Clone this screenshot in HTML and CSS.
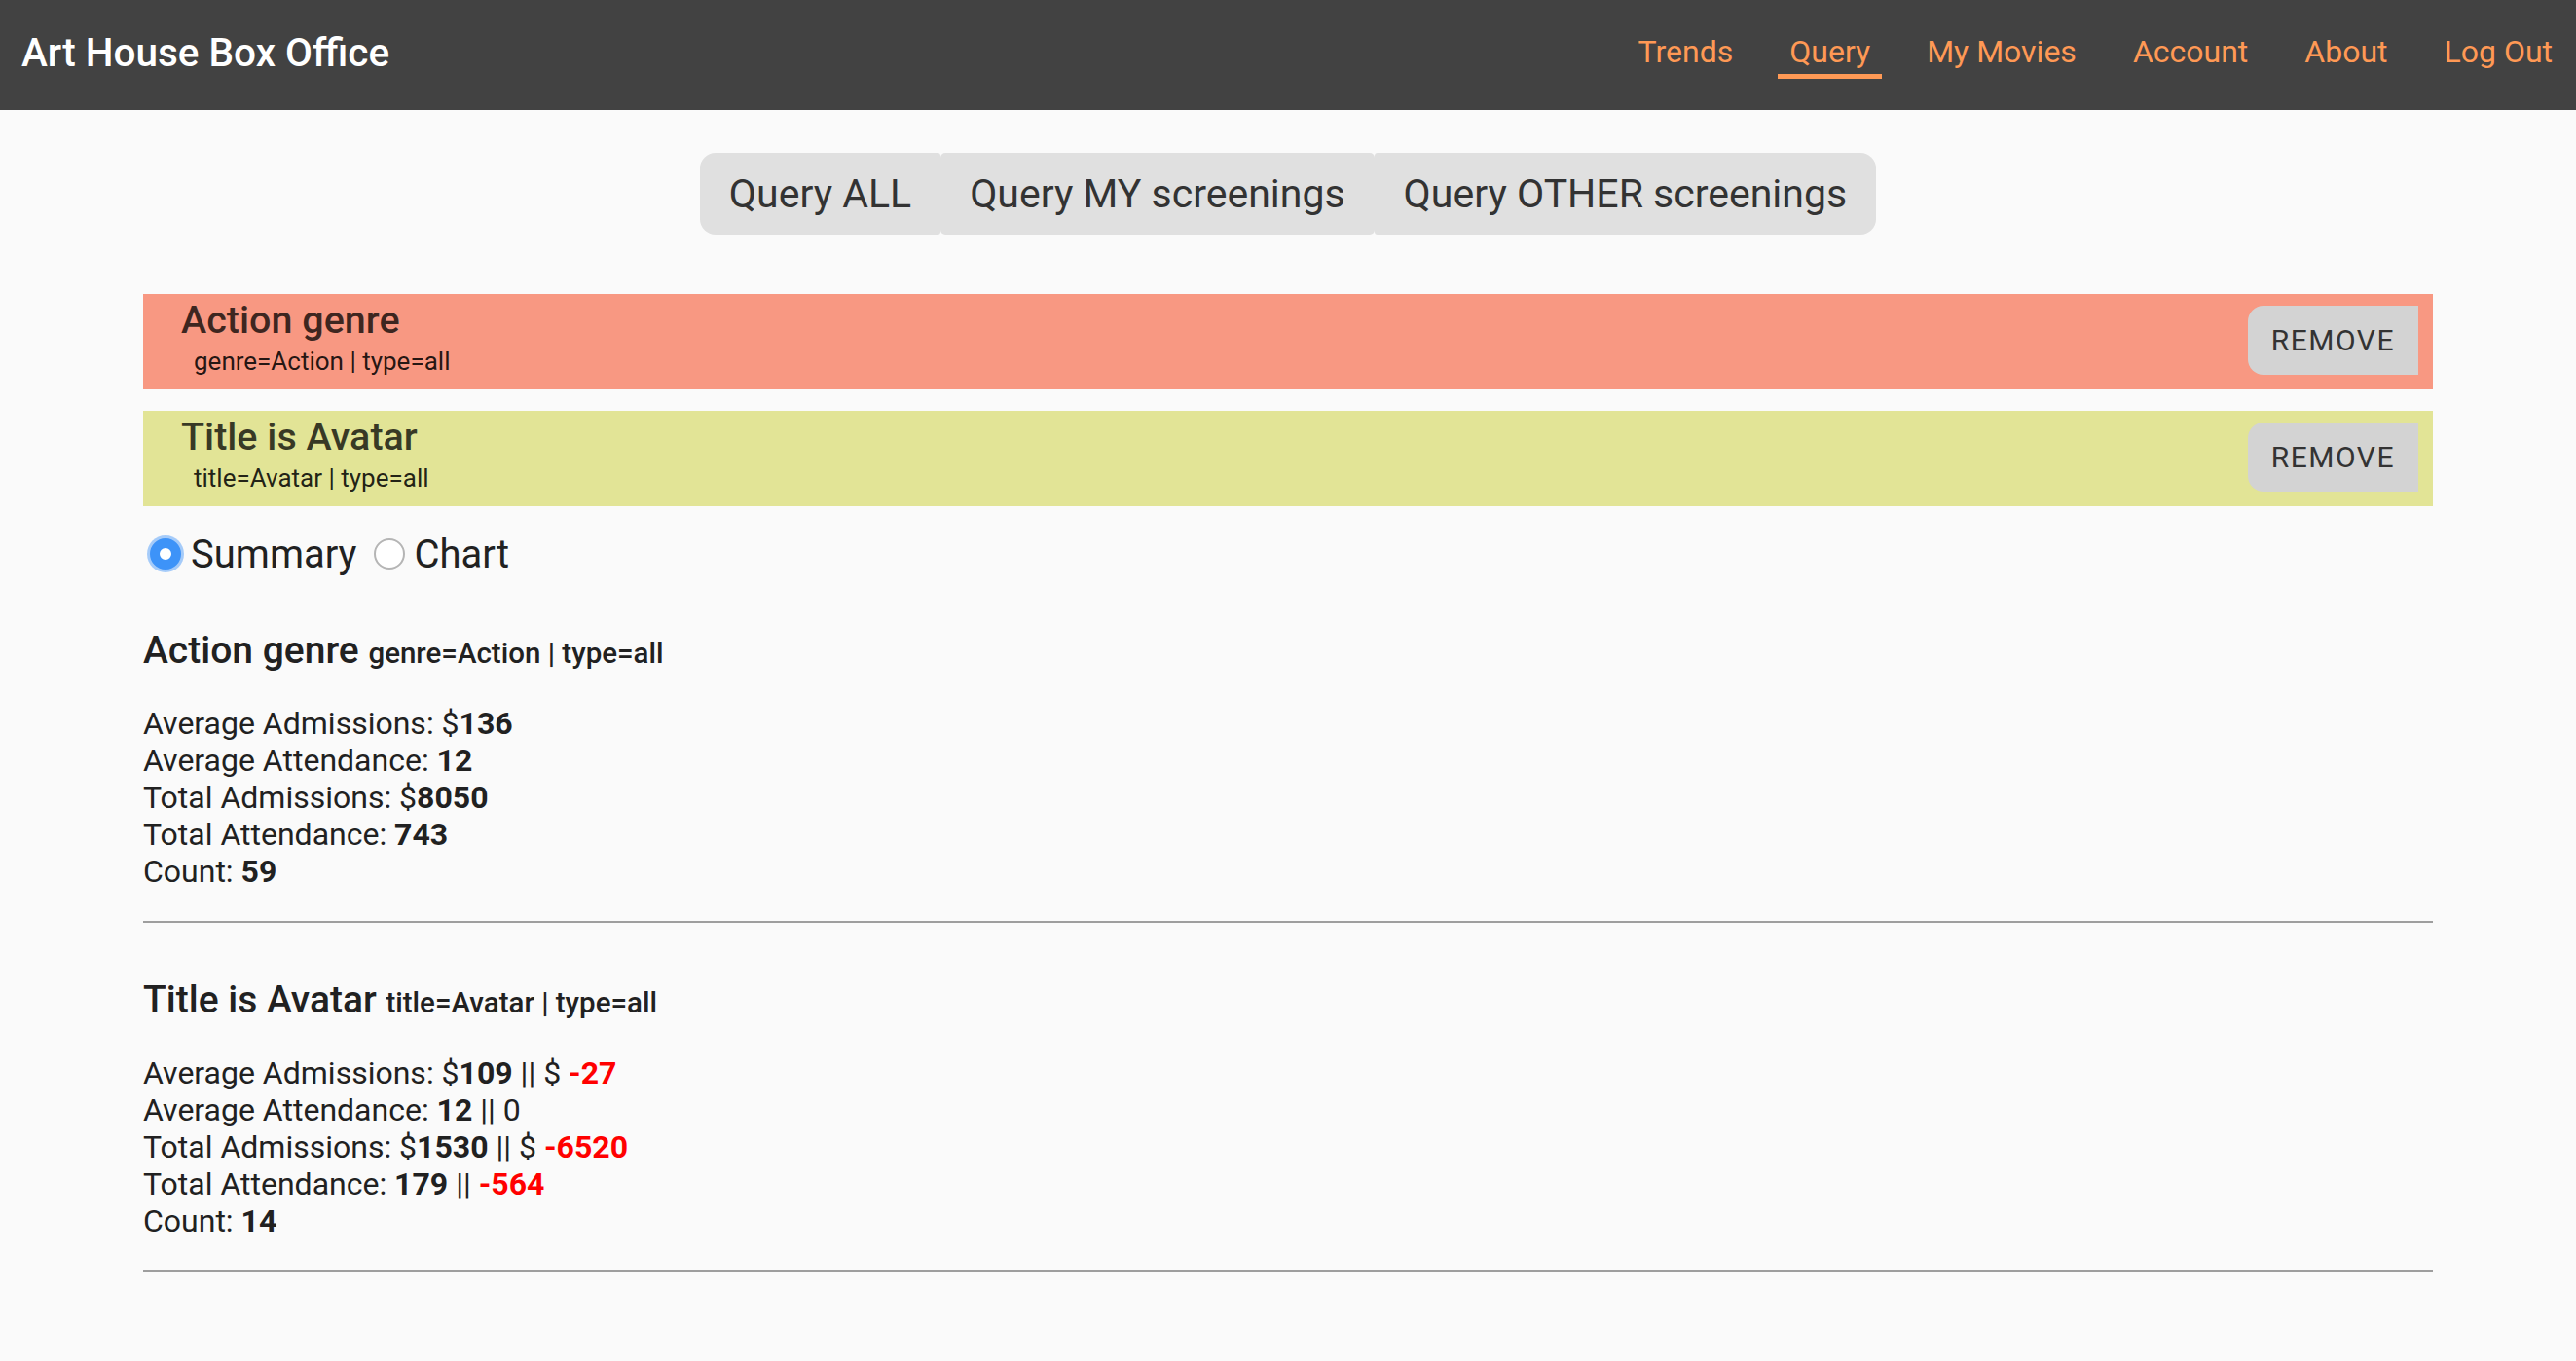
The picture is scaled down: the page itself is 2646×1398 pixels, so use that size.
FILE: index.html
```html
<!DOCTYPE html>
<html lang="en">
<head>
    <meta charset="UTF-8">
    <meta name="viewport" content="width=device-width, initial-scale=1.0">
    <title>Art House Box Office</title>
    <link rel="stylesheet" href="styles.css">
</head>
<body>

    <header class="topbar">
        <div class="brand">Art House Box Office</div>
        <nav class="nav">
            <a href="#">Trends</a>
            <a href="#" class="active">Query</a>
            <a href="#">My Movies</a>
            <a href="#">Account</a>
            <a href="#">About</a>
            <a href="#">Log Out</a>
        </nav>
    </header>

    <main class="page">
        <div class="query-tabs">
            <button>Query ALL</button>
            <button>Query MY screenings</button>
            <button>Query OTHER screenings</button>
        </div>

        <div class="filters">
            <div class="filter genre">
                <div class="filter-text">
                    <div class="filter-name">Action genre</div>
                    <div class="filter-params">genre=Action | type=all</div>
                </div>
                <button class="remove">REMOVE</button>
            </div>
            <div class="filter title">
                <div class="filter-text">
                    <div class="filter-name">Title is Avatar</div>
                    <div class="filter-params">title=Avatar | type=all</div>
                </div>
                <button class="remove">REMOVE</button>
            </div>
        </div>

        <div class="view-toggle">
            <label class="option"><input type="radio" name="view" checked> Summary</label>
            <label class="option"><input type="radio" name="view"> Chart</label>
        </div>

        <section class="summary">
            <h2>Action genre <small>genre=Action | type=all</small></h2>
            <div class="stats">
                <div>Average Admissions: $<b>136</b></div>
                <div>Average Attendance: <b>12</b></div>
                <div>Total Admissions: $<b>8050</b></div>
                <div>Total Attendance: <b>743</b></div>
                <div>Count: <b>59</b></div>
            </div>
            <hr>
        </section>

        <section class="summary">
            <h2>Title is Avatar <small>title=Avatar | type=all</small></h2>
            <div class="stats">
                <div>Average Admissions: $<b>109</b> || $ <b class="neg">-27</b></div>
                <div>Average Attendance: <b>12</b> || 0</div>
                <div>Total Admissions: $<b>1530</b> || $ <b class="neg">-6520</b></div>
                <div>Total Attendance: <b>179</b> || <b class="neg">-564</b></div>
                <div>Count: <b>14</b></div>
            </div>
            <hr>
        </section>
    </main>

</body>
</html>
```

FILE: styles.css
```css
* {
    box-sizing: border-box;
}

body {
    margin: 0;
    background: #fafafa;
    font-family: Roboto, "Noto Sans", sans-serif;
    color: #212121;
}

.topbar {
    display: flex;
    align-items: center;
    justify-content: space-between;
    height: 113px;
    padding: 0 12px 0 22px;
    background: #424242;
}

.brand {
    margin-bottom: 6px;
    color: #fff;
    font-size: 40.5px;
    font-weight: 500;
}

.nav {
    display: flex;
    gap: 34px;
}

.nav a {
    color: #ff9955;
    text-decoration: none;
    font-size: 32px;
    line-height: 40px;
    padding: 0 12px 3px;
    border-bottom: 5px solid transparent;
}

.nav a.active {
    border-bottom-color: #ff9955;
}

.page {
    padding: 44px 147px 60px;
}

.query-tabs {
    display: flex;
    justify-content: center;
    margin-bottom: 61px;
}

.query-tabs button {
    height: 84px;
    padding: 0 30px;
    border: none;
    border-radius: 5px;
    background: #e0e0e0;
    color: #333;
    font-family: Roboto, sans-serif;
    font-size: 41px;
    cursor: pointer;
}

.query-tabs button:first-child {
    border-radius: 16px 3px 3px 16px;
}

.query-tabs button:last-child {
    border-radius: 3px 16px 16px 3px;
}

.filters {
    display: flex;
    flex-direction: column;
    gap: 22px;
    margin-bottom: 25px;
}

.filter {
    display: flex;
    align-items: flex-start;
    height: 98px;
}

.filter.genre { background: #f89882; }
.filter.title { background: #e2e496; }

.filter-text {
    padding: 4px 0 0 39px;
}

.filter-name {
    font-size: 39.5px;
    font-weight: 500;
    line-height: 46px;
    color: rgba(0, 0, 0, 0.76);
}

.filter-params {
    margin-top: 3px;
    padding-left: 13px;
    font-size: 26px;
    line-height: 32px;
    color: rgba(0, 0, 0, 0.87);
}

.remove {
    margin: 12px 15px 0 auto;
    height: 71px;
    padding: 0 24px;
    border: none;
    border-radius: 16px 0 0 16px;
    background: #d3d3d3;
    color: #333;
    font-family: Roboto, sans-serif;
    font-size: 30px;
    letter-spacing: 1.5px;
    cursor: pointer;
}

.view-toggle {
    display: flex;
    align-items: center;
    gap: 17px;
    height: 48px;
    margin-bottom: 51px;
    padding-left: 7px;
    font-size: 40px;
}

.option {
    display: flex;
    align-items: center;
    gap: 10px;
}

.option input {
    appearance: none;
    -webkit-appearance: none;
    width: 32px;
    height: 32px;
    margin: 0;
    border: 2px solid #b5b5b5;
    border-radius: 50%;
    background: #fff;
}

.option input:checked {
    border: 10px solid #3d93f8;
    background: #fff;
    box-shadow: 0 0 0 3px rgba(61, 147, 248, 0.45);
}

.summary h2 {
    margin: 0;
    font-size: 39px;
    font-weight: 500;
    line-height: 48px;
}

.summary h2 small {
    font-size: 29.5px;
    font-weight: 500;
}

.stats {
    margin-top: 29px;
    font-size: 32px;
    line-height: 38px;
}

.stats b {
    font-weight: 700;
}

.stats .neg {
    color: #ff0000;
}

.summary hr {
    margin: 32px 0 55px;
    border: 0;
    border-top: 2px solid #9e9e9e;
}
```
